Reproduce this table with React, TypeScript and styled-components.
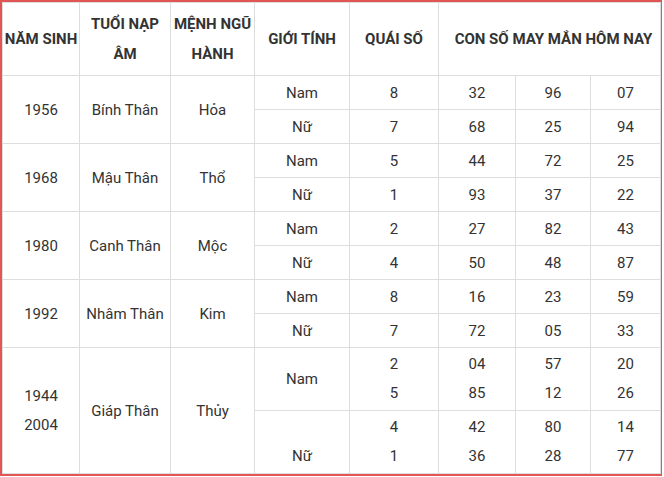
import React from 'react';
import styled, { createGlobalStyle } from 'styled-components';

const GlobalStyle = createGlobalStyle`
	body {
		margin: 0;
		background: #fff;
		font-family: Roboto, 'Liberation Sans', sans-serif;
		color: #333;
	}
`;

const Frame = styled.div`
	width: 662px;
	box-sizing: border-box;
	border: 2px solid #e25555;
`;

const Table = styled.table`
	width: 100%;
	table-layout: fixed;
	border-collapse: collapse;
	font-family: Roboto, 'Liberation Sans', sans-serif;
	font-size: 15px;
`;

const HeadCell = styled.th<{ $shift?: boolean }>`
	border: 1px solid #ddd;
	height: 72px;
	padding: 0 0 0 ${(p) => (p.$shift ? '8px' : '0')};
	font-weight: 700;
	line-height: 30px;
	text-align: center;
	white-space: nowrap;
	color: #333;
`;

const Row = styled.tr<{ $tall?: boolean }>`
	height: ${(p) => (p.$tall ? '63px' : '34px')};
`;

const Cell = styled.td<{ $stacked?: boolean }>`
	border: 1px solid #ddd;
	padding: 0 2px;
	text-align: center;
	vertical-align: middle;
	white-space: nowrap;
	line-height: ${(p) => (p.$stacked ? '29px' : '24px')};
	color: #333;
`;

type Line = { gender: string; blankFirst?: boolean; quai: string[]; nums: string[][] };
type Group = { years: string[]; tuoi: string; menh: string; rows: Line[] };

const groups: Group[] = [
	{
		years: ['1956'],
		tuoi: 'Bính Thân',
		menh: 'Hỏa',
		rows: [
			{ gender: 'Nam', quai: ['8'], nums: [['32', '96', '07']] },
			{ gender: 'Nữ', quai: ['7'], nums: [['68', '25', '94']] },
		],
	},
	{
		years: ['1968'],
		tuoi: 'Mậu Thân',
		menh: 'Thổ',
		rows: [
			{ gender: 'Nam', quai: ['5'], nums: [['44', '72', '25']] },
			{ gender: 'Nữ', quai: ['1'], nums: [['93', '37', '22']] },
		],
	},
	{
		years: ['1980'],
		tuoi: 'Canh Thân',
		menh: 'Mộc',
		rows: [
			{ gender: 'Nam', quai: ['2'], nums: [['27', '82', '43']] },
			{ gender: 'Nữ', quai: ['4'], nums: [['50', '48', '87']] },
		],
	},
	{
		years: ['1992'],
		tuoi: 'Nhâm Thân',
		menh: 'Kim',
		rows: [
			{ gender: 'Nam', quai: ['8'], nums: [['16', '23', '59']] },
			{ gender: 'Nữ', quai: ['7'], nums: [['72', '05', '33']] },
		],
	},
	{
		years: ['1944', '2004'],
		tuoi: 'Giáp Thân',
		menh: 'Thủy',
		rows: [
			{
				gender: 'Nam',
				quai: ['2', '5'],
				nums: [
					['04', '57', '20'],
					['85', '12', '26'],
				],
			},
			{
				gender: 'Nữ',
				blankFirst: true,
				quai: ['4', '1'],
				nums: [
					['42', '80', '14'],
					['36', '28', '77'],
				],
			},
		],
	},
];

const widths = [77, 91, 84, 95, 89, 77, 75, 70];

function lines(items: string[]) {
	return items.map((t, i) => (
		<React.Fragment key={i}>
			{i > 0 && <br />}
			{t}
		</React.Fragment>
	));
}

function App() {
	return (
		<>
			<GlobalStyle />
			<Frame>
				<Table>
					<colgroup>
						{widths.map((w, i) => (
							<col key={i} style={{ width: w }} />
						))}
					</colgroup>
					<thead>
						<tr>
							<HeadCell>NĂM SINH</HeadCell>
							<HeadCell>
								TUỔI NẠP
								<br />
								ÂM
							</HeadCell>
							<HeadCell>
								MỆNH NGŨ
								<br />
								HÀNH
							</HeadCell>
							<HeadCell>GIỚI TÍNH</HeadCell>
							<HeadCell>QUÁI SỐ</HeadCell>
							<HeadCell colSpan={3} $shift>
								CON SỐ MAY MẮN HÔM NAY
							</HeadCell>
						</tr>
					</thead>
					<tbody>
						{groups.map((g) =>
							g.rows.map((r, ri) => {
								const stacked = r.quai.length > 1;
								return (
									<Row key={g.tuoi + ri} $tall={stacked}>
										{ri === 0 && (
											<>
												<Cell rowSpan={g.rows.length} $stacked={g.years.length > 1}>
													{lines(g.years)}
												</Cell>
												<Cell rowSpan={g.rows.length}>{g.tuoi}</Cell>
												<Cell rowSpan={g.rows.length}>{g.menh}</Cell>
											</>
										)}
										<Cell $stacked={stacked}>
											{r.blankFirst ? lines(['\u00a0', r.gender]) : r.gender}
										</Cell>
										<Cell $stacked={stacked}>{lines(r.quai)}</Cell>
										{[0, 1, 2].map((c) => (
											<Cell key={c} $stacked={stacked}>
												{lines(r.nums.map((n) => n[c]))}
											</Cell>
										))}
									</Row>
								);
							})
						)}
					</tbody>
				</Table>
			</Frame>
		</>
	);
}

export default App;
